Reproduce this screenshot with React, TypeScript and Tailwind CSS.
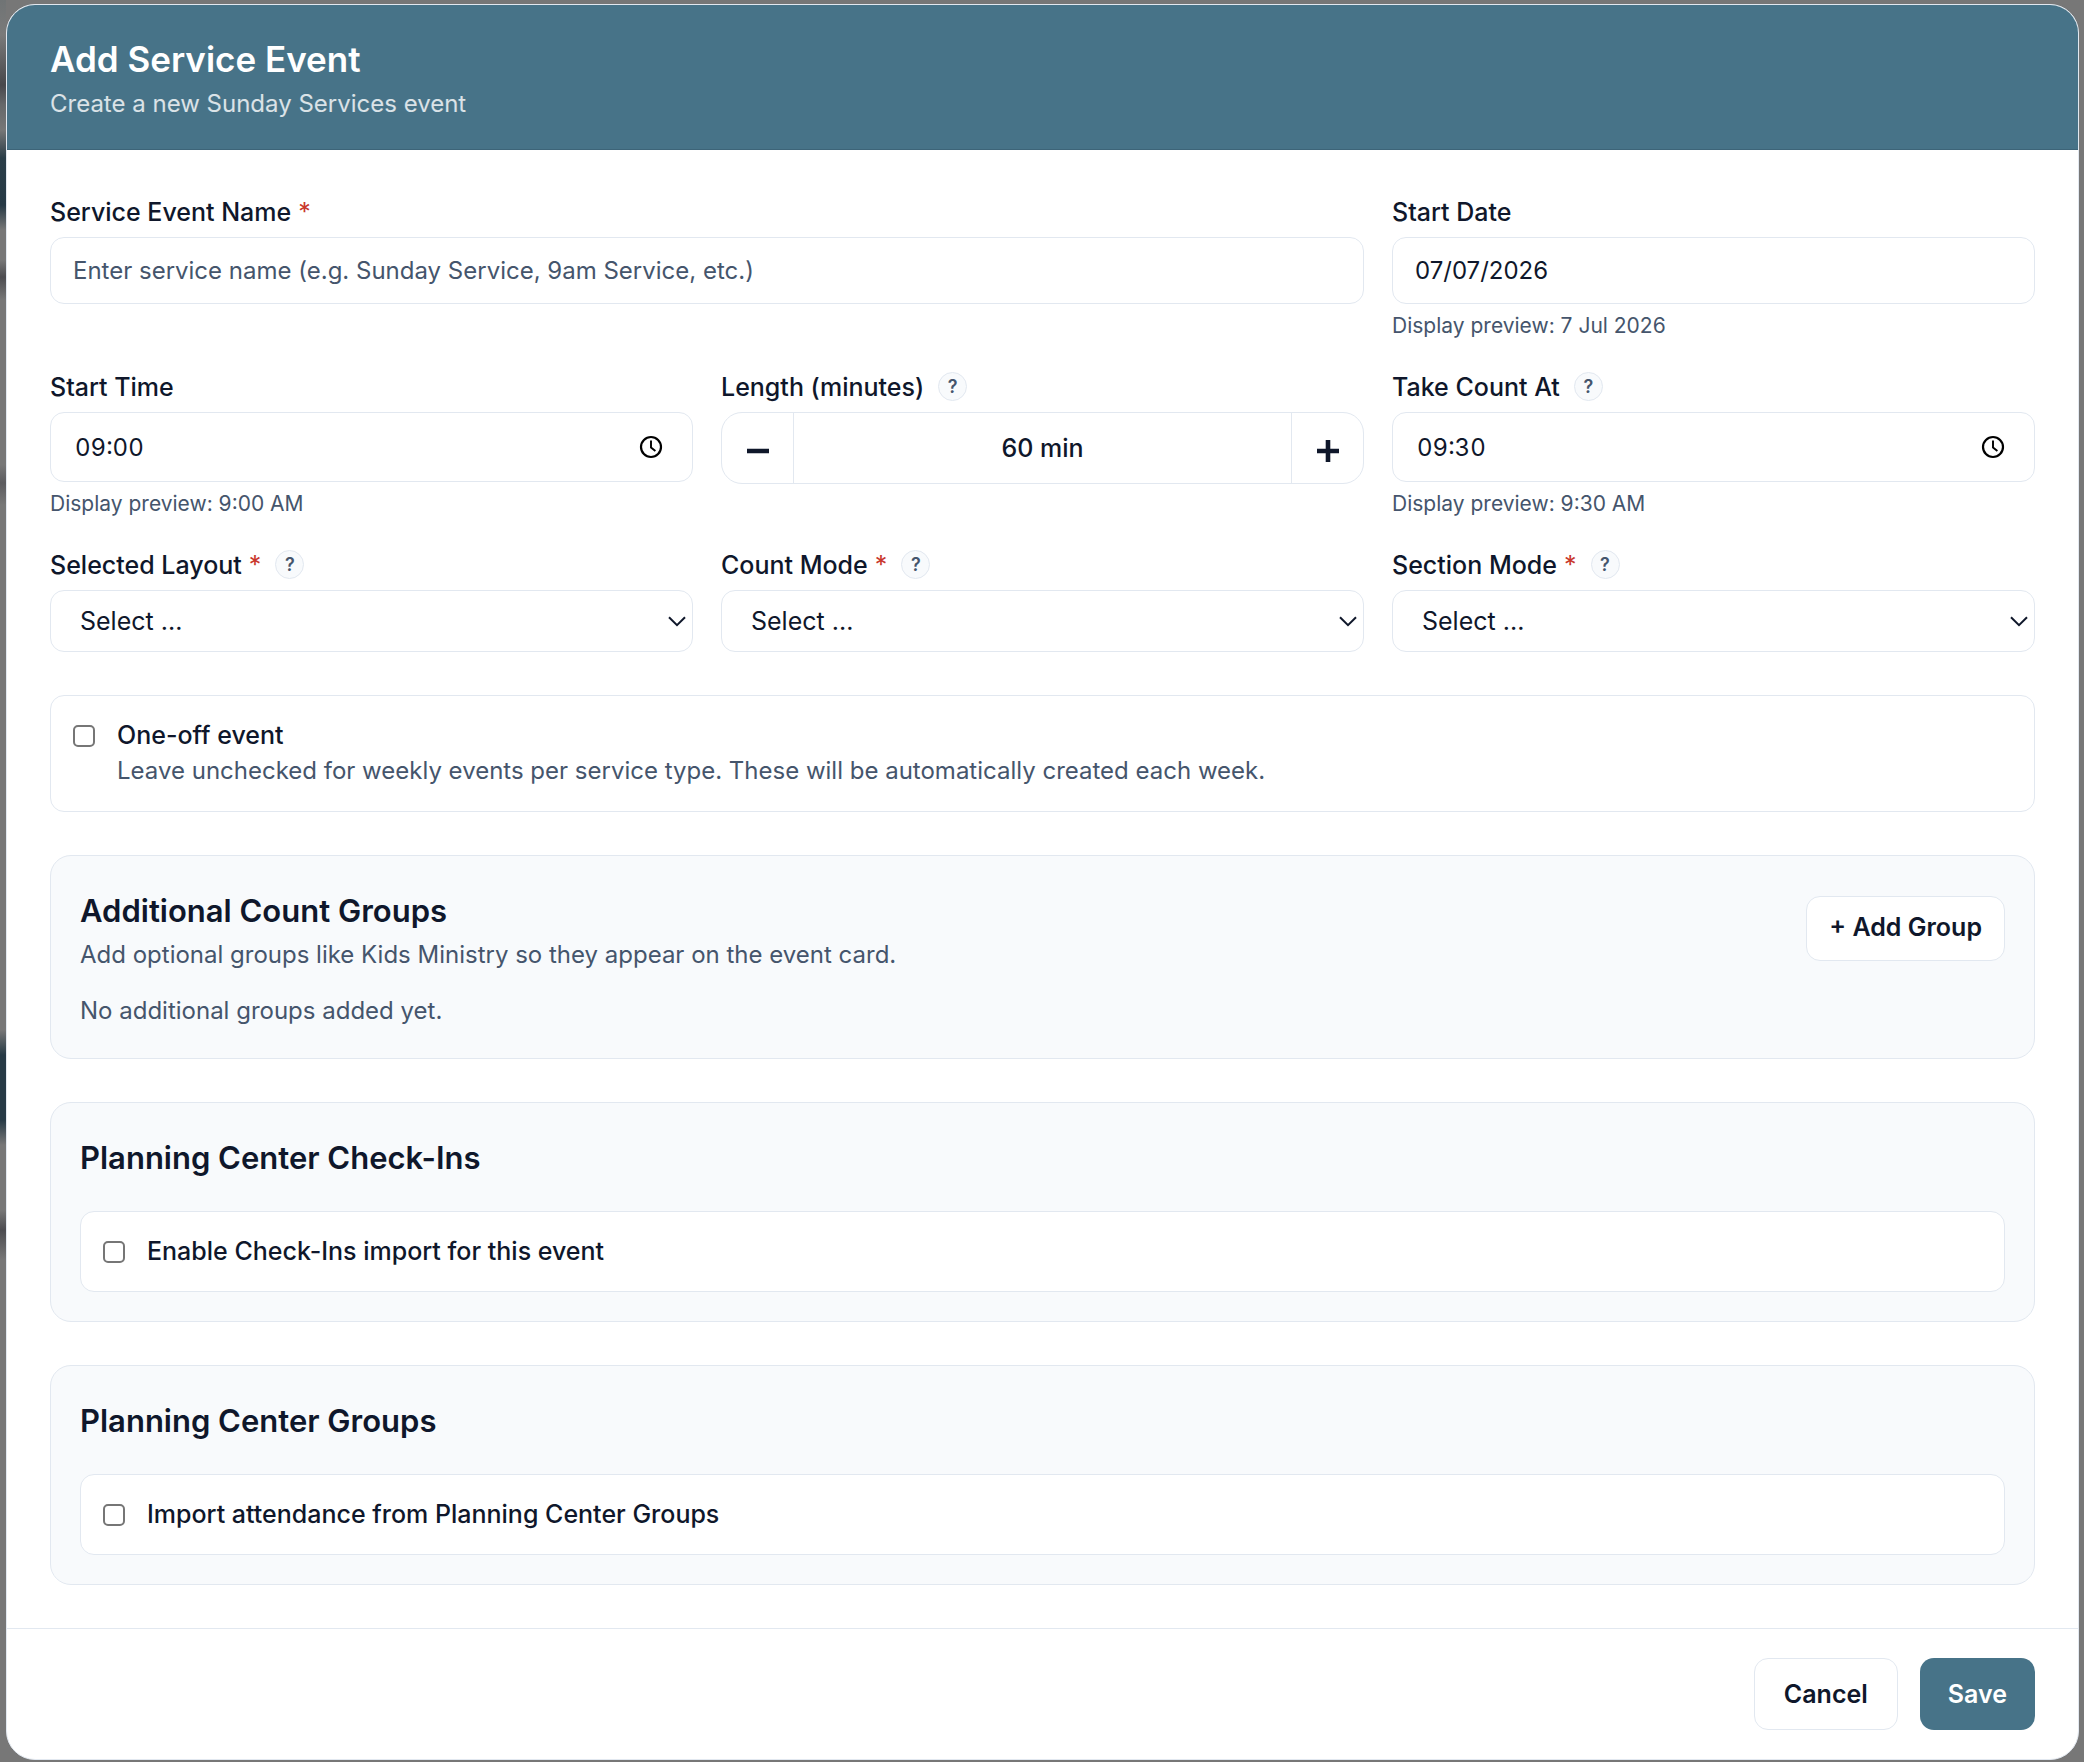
import { useState } from "react";
import type { ReactNode } from "react";

const inputClass =
  "block w-full rounded-[14px] border border-slate-200 bg-white text-[24px] text-slate-900 placeholder:text-slate-600 placeholder:opacity-100 outline-none";

function Help({ topic }: { topic: string }) {
  return (
    <button
      type="button"
      aria-label={`Help: ${topic}`}
      className="ml-[14px] flex size-[29px] items-center justify-center rounded-full border border-slate-200 bg-slate-50 text-[18px] leading-none font-semibold text-slate-600"
    >
      ?
    </button>
  );
}

type FieldProps = {
  id: string;
  label: string;
  required?: boolean;
  help?: boolean;
  preview?: string;
  className?: string;
  children: ReactNode;
};

function Field({ id, label, required, help, preview, className, children }: FieldProps) {
  return (
    <div className={className}>
      <div className="mb-[7px] flex h-[37px] items-center">
        <label htmlFor={id} className="pt-[2px] text-[25px] leading-[37px] font-medium">
          {label}
          {required && <span className="font-normal text-[#c9372c]"> *</span>}
        </label>
        {help && <Help topic={label} />}
      </div>
      {children}
      {preview && (
        <p className="mt-[7px] text-[21px] leading-[29px] text-slate-600">Display preview: {preview}</p>
      )}
    </div>
  );
}

function ClockIcon() {
  return (
    <svg viewBox="0 0 24 24" className="size-6" fill="none" stroke="black" aria-hidden="true">
      <circle cx="12" cy="12" r="10" strokeWidth="2.2" />
      <path d="M12 5.5v7l4.4 3.6" strokeWidth="1.9" />
    </svg>
  );
}

function TimeInput({ id, initial }: { id: string; initial: string }) {
  return (
    <div className="relative">
      <input
        id={id}
        type="text"
        defaultValue={initial}
        className={`${inputClass} h-[70px] px-[24px] tabular-nums`}
      />
      <button
        type="button"
        aria-label="Choose time"
        className="absolute inset-y-0 right-[30px] flex items-center"
      >
        <ClockIcon />
      </button>
    </div>
  );
}

function SelectInput({ id }: { id: string }) {
  return (
    <div className="relative">
      <select
        id={id}
        className="block h-[62px] w-full appearance-none rounded-[14px] border border-slate-200 bg-white px-[29px] pt-[2px] text-[25px] text-slate-900 outline-none"
      >
        <option>Select ...</option>
      </select>
      <svg
        viewBox="0 0 18 11"
        className="pointer-events-none absolute top-[26px] right-[7px] h-[11px] w-[18px]"
        fill="none"
        stroke="#0f172a"
        strokeWidth="2"
        aria-hidden="true"
      >
        <path d="M1 1.2l8 8 8-8" />
      </svg>
    </div>
  );
}

function CheckRow({ id, label, note }: { id: string; label: string; note?: string }) {
  return (
    <div className="flex rounded-[14px] border border-slate-200 bg-white px-[22px] pt-[21px] pb-[22px]">
      <input
        id={id}
        type="checkbox"
        className="mt-[8px] mr-[22px] size-[22px] shrink-0 appearance-none rounded-[5px] border-2 border-[#767676] bg-white checked:bg-[#477388]"
      />
      <div className="leading-[36px]">
        <label htmlFor={id} className="block text-[25px] font-medium">
          {label}
        </label>
        {note && <p className="text-[24px] text-slate-600">{note}</p>}
      </div>
    </div>
  );
}

function Panel({ children }: { children: ReactNode }) {
  return (
    <section className="mt-[43px] rounded-[21px] border border-slate-200 bg-slate-50 px-[29px] pt-[28px] pb-[29px]">
      {children}
    </section>
  );
}

export default function App() {
  const [minutes, setMinutes] = useState(60);

  return (
    <div className="bg-[#777]">
      <div className="min-h-screen bg-[linear-gradient(to_bottom,#707475_0,#7a7a7a_35px,#48484c_85px,#66686a_105px,#777_130px,#2a3d48_158px,#263945_205px,#777_230px,#777_260px,#4c4c50_277px,#777_300px,#777_465px,#5c5c5f_483px,#777_505px,#777_1030px,#263945_1055px,#263945_1120px,#777_1145px,#777_1210px,#4c4c50_1230px,#777_1260px,#777_100%)] bg-[length:6px_100%] bg-no-repeat pt-1 pr-[5px] pb-[2px] pl-[6px] font-['Inter',sans-serif] text-slate-900">
        <div
          role="dialog"
          aria-labelledby="dialog-title"
          className="overflow-hidden rounded-[29px] border border-slate-200 bg-white"
        >
          <header className="border-b border-[#3d6478] bg-[#477388] px-[43px] pt-[29px] pb-[26px] text-white">
            <h1 id="dialog-title" className="text-[35px] leading-[50px] font-semibold">
              Add Service Event
            </h1>
            <p className="text-[24px] leading-[39px] text-white/80">Create a new Sunday Services event</p>
          </header>

          <form onSubmit={(e) => e.preventDefault()}>
            <div className="p-[43px]">
              <div className="grid grid-cols-3 gap-[28px]">
                <Field id="name" label="Service Event Name" required className="col-span-2">
                  <input
                    id="name"
                    type="text"
                    placeholder="Enter service name (e.g. Sunday Service, 9am Service, etc.)"
                    className={`${inputClass} h-[67px] px-[22px]`}
                  />
                </Field>
                <Field id="date" label="Start Date" preview="7 Jul 2026">
                  <input
                    id="date"
                    type="text"
                    defaultValue="07/07/2026"
                    className={`${inputClass} h-[67px] px-[22px]`}
                  />
                </Field>

                <Field id="start" label="Start Time" preview="9:00 AM">
                  <TimeInput id="start" initial="09:00" />
                </Field>
                <Field id="length" label="Length (minutes)" help>
                  <div className="flex h-[72px] overflow-hidden rounded-[21px] border border-slate-200">
                    <button
                      type="button"
                      aria-label="Decrease length"
                      onClick={() => setMinutes(Math.max(5, minutes - 5))}
                      className="flex w-[72px] items-center justify-center border-r border-slate-200 pt-[6px]"
                    >
                      <svg viewBox="0 0 22 22" className="size-[22px]" stroke="#0f172a" strokeWidth="4.6" aria-hidden="true">
                        <path d="M0 11h22" />
                      </svg>
                    </button>
                    <output
                      id="length"
                      className="flex flex-1 items-center justify-center pt-[2px] text-[25px] font-medium"
                    >
                      {minutes} min
                    </output>
                    <button
                      type="button"
                      aria-label="Increase length"
                      onClick={() => setMinutes(minutes + 5)}
                      className="flex w-[72px] items-center justify-center border-l border-slate-200 pt-[6px]"
                    >
                      <svg viewBox="0 0 22 22" className="size-[22px]" stroke="#0f172a" strokeWidth="4.6" aria-hidden="true">
                        <path d="M0 11h22M11 0v22" />
                      </svg>
                    </button>
                  </div>
                </Field>
                <Field id="count-at" label="Take Count At" help preview="9:30 AM">
                  <TimeInput id="count-at" initial="09:30" />
                </Field>

                <Field id="layout" label="Selected Layout" required help>
                  <SelectInput id="layout" />
                </Field>
                <Field id="count-mode" label="Count Mode" required help>
                  <SelectInput id="count-mode" />
                </Field>
                <Field id="section-mode" label="Section Mode" required help>
                  <SelectInput id="section-mode" />
                </Field>
              </div>

              <div className="mt-[43px]">
                <CheckRow
                  id="one-off"
                  label="One-off event"
                  note="Leave unchecked for weekly events per service type. These will be automatically created each week."
                />
              </div>

              <Panel>
                <div className="flex items-center justify-between">
                  <div>
                    <h2 className="text-[31px] leading-[54px] font-semibold">Additional Count Groups</h2>
                    <p className="text-[24px] leading-[34px] text-slate-600">
                      Add optional groups like Kids Ministry so they appear on the event card.
                    </p>
                  </div>
                  <button
                    type="button"
                    className="h-[65px] rounded-[14px] border border-slate-200 bg-white px-[22px] text-[25px] font-semibold"
                  >
                    + Add Group
                  </button>
                </div>
                <p className="mt-[21px] text-[24px] leading-[36px] text-slate-600">
                  No additional groups added yet.
                </p>
              </Panel>

              <Panel>
                <h2 className="mb-[26px] text-[31px] leading-[54px] font-semibold">Planning Center Check-Ins</h2>
                <CheckRow id="check-ins" label="Enable Check-Ins import for this event" />
              </Panel>

              <Panel>
                <h2 className="mb-[26px] text-[31px] leading-[54px] font-semibold">Planning Center Groups</h2>
                <CheckRow id="groups" label="Import attendance from Planning Center Groups" />
              </Panel>
            </div>

            <footer className="flex justify-end gap-[22px] border-t border-slate-200 px-[43px] py-[29px]">
              <button
                type="button"
                className="h-[72px] rounded-[14px] border border-slate-200 bg-white px-[29px] pt-[2px] text-[25px] font-semibold"
              >
                Cancel
              </button>
              <button
                type="submit"
                className="h-[72px] rounded-[14px] bg-[#477388] px-[28px] pt-[2px] text-[25px] font-semibold text-white"
              >
                Save
              </button>
            </footer>
          </form>
        </div>
      </div>
    </div>
  );
}
